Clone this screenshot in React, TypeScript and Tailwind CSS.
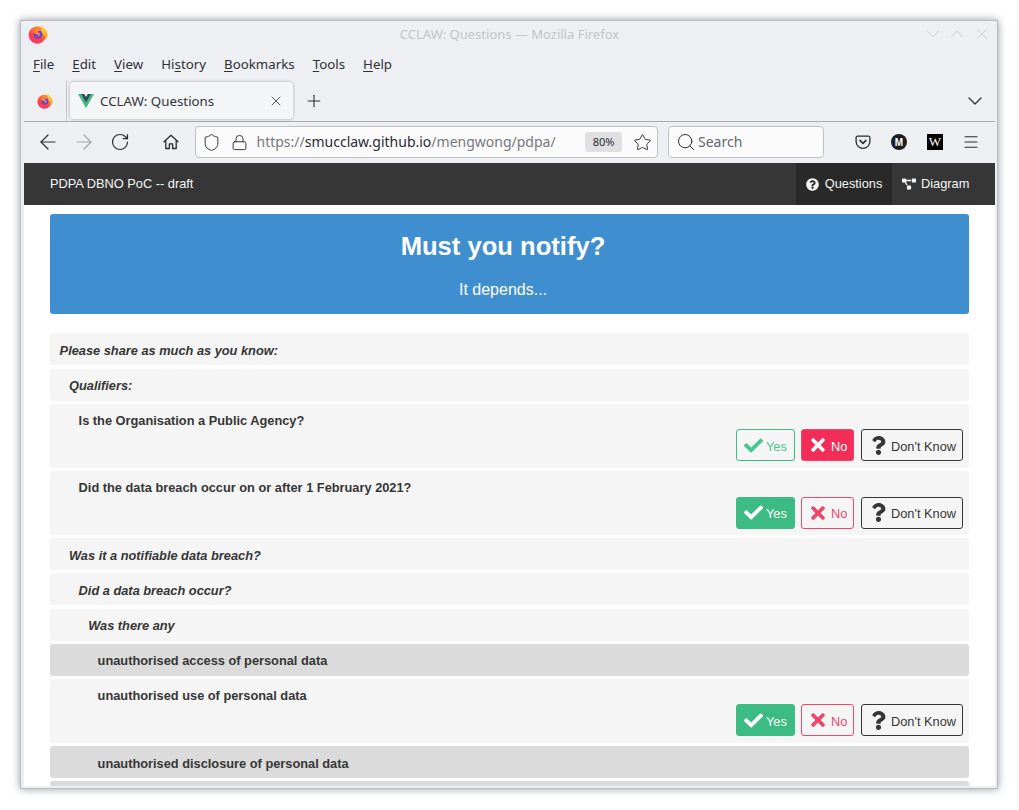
import React from "react";
import {
  ArrowLeft,
  ArrowRight,
  ChevronDown,
  ChevronUp,
  Lock,
  Menu,
  Plus,
  RotateCw,
  Search,
  Shield,
  Star,
  X,
} from "lucide-react";
import { FaCheck, FaProjectDiagram, FaQuestion, FaQuestionCircle, FaTimes } from "react-icons/fa";

type Answer = "yes" | "no" | "none";

interface Row {
  text: string;
  depth: number;
  italic?: boolean;
  grey?: boolean;
  answer?: Answer;
}

const rows: Row[] = [
  { text: "Please share as much as you know:", depth: 0, italic: true },
  { text: "Qualifiers:", depth: 1, italic: true },
  { text: "Is the Organisation a Public Agency?", depth: 2, answer: "no" },
  { text: "Did the data breach occur on or after 1 February 2021?", depth: 2, answer: "yes" },
  { text: "Was it a notifiable data breach?", depth: 1, italic: true },
  { text: "Did a data breach occur?", depth: 2, italic: true },
  { text: "Was there any", depth: 3, italic: true },
  { text: "unauthorised access of personal data", depth: 4, grey: true },
  { text: "unauthorised use of personal data", depth: 4, answer: "yes" },
  { text: "unauthorised disclosure of personal data", depth: 4, grey: true },
  { text: "", depth: 4, grey: true },
];

function FirefoxLogo({ size, id }: { size: number; id: string }) {
  return (
    <svg width={size} height={size} viewBox="0 0 32 32">
      <defs>
        <linearGradient id={`${id}Body`} x1="0.8" y1="0.1" x2="0.2" y2="0.95">
          <stop offset="0" stopColor="#ff9a2e" />
          <stop offset="0.55" stopColor="#ff4f3a" />
          <stop offset="1" stopColor="#e8246e" />
        </linearGradient>
        <linearGradient id={`${id}Flame`} x1="0.5" y1="0" x2="0.5" y2="1">
          <stop offset="0" stopColor="#ffe14d" />
          <stop offset="1" stopColor="#ff9a1f" />
        </linearGradient>
      </defs>
      <circle cx="15" cy="17.5" r="14" fill={`url(#${id}Body)`} />
      <path d="M21 0c1 5 8 6 10 14 1 5-1 9-3 11 0-6-4-10-9-12 3-3 3-8 2-13z" fill={`url(#${id}Flame)`} />
      <circle cx="16" cy="16.5" r="7" fill="#6a3fd6" />
      <path d="M9 11c3-3 9-3 11 1-2-1-4-1-5 1 3 0 5 2 4 5-1 2-4 3-6 2 3 0 4-2 3-3-2-1-7-1-7-6z" fill="#ff8a3a" />
      <path d="M2 12c1 8 8 14 16 13 3 0 6-2 8-4-2 6-9 10-14 9C5 29 0 20 2 12z" fill="#ff3d5a" />
    </svg>
  );
}

function VueLogo() {
  return (
    <svg width="16" height="14" viewBox="0 0 261.76 226.69">
      <path d="M161.096.001l-30.225 52.351L100.647.001H-.005l130.877 226.688L261.749.001z" fill="#41b883" />
      <path d="M161.096.001l-30.225 52.351L100.647.001H52.346l78.526 136.01L209.398.001z" fill="#34495e" />
    </svg>
  );
}

function PocketIcon() {
  return (
    <svg width="16" height="16" viewBox="0 0 16 16" fill="none" stroke="#2b2a33" strokeWidth="1.3">
      <path d="M2.5 2.2h11a1.4 1.4 0 0 1 1.4 1.4v3.9a6.9 6.9 0 0 1-13.8 0V3.6a1.4 1.4 0 0 1 1.4-1.4z" />
      <path d="M5 6.4l3 3 3-3" strokeLinecap="round" strokeLinejoin="round" strokeWidth="1.5" />
    </svg>
  );
}

function HomeIcon() {
  return (
    <svg width="16" height="16" viewBox="0 0 16 16" fill="none" stroke="#2b2a33" strokeWidth="1.3" strokeLinejoin="round">
      <path d="M1 7.8L8 1.2l7 6.6" strokeLinecap="round" />
      <path d="M2.8 6.5v8h3.6V9.8h3.2v4.7h3.6v-8" />
    </svg>
  );
}

function MenuLabel({ pre, mark, post }: { pre?: string; mark: string; post: string }) {
  return (
    <span>
      {pre}
      <span className="underline underline-offset-2">{mark}</span>
      {post}
    </span>
  );
}

function AnswerButtons({ answer }: { answer: Answer }) {
  return (
    <div className="flex justify-end gap-[6px] font-['Liberation_Sans',sans-serif] text-[12.8px]">
      <button
        className={`flex h-[32px] w-[59px] items-center gap-[3px] rounded-[3px] border border-[#3cbb84] pl-[7px] ${
          answer === "yes" ? "bg-[#3cbb84] text-white" : "text-[#48c78e]"
        }`}
      >
        <FaCheck className="text-[19px]" />
        <span className="pt-[2px]">Yes</span>
      </button>
      <button
        className={`flex h-[32px] w-[53px] items-center gap-[3px] rounded-[3px] border border-[#f14668] pl-[6px] ${
          answer === "no" ? "bg-[#f22d57] text-white" : "text-[#f14668]"
        }`}
      >
        <FaTimes className="text-[20px]" />
        <span className="pt-[2px]">No</span>
      </button>
      <button className="ml-px flex h-[32px] w-[102px] items-center gap-[3.5px] rounded-[3px] border border-[#363636] pl-[6.5px] text-[#363636]">
        <FaQuestion className="text-[19px]" />
        <span className="pt-[2px]">Don't Know</span>
      </button>
    </div>
  );
}

function QuestionRow({ row }: { row: Row }) {
  const tall = row.answer !== undefined;
  return (
    <div
      className={`shrink-0 rounded-[3px] pr-[6px] ${row.grey ? "bg-[#dbdbdb]" : "bg-[#f5f5f5]"} ${
        tall ? "h-[64px]" : "h-[32px]"
      }`}
    >
      <div
        className={`h-[25.6px] pt-[9.45px] text-[12.8px] leading-[15px] font-bold text-[#363636] ${row.italic ? "italic" : ""} ${
          row.depth === 0
            ? "pl-[9.6px]"
            : row.depth === 1
              ? "pl-[19px]"
              : row.depth === 2
                ? "pl-[28.6px]"
                : row.depth === 3
                  ? "pl-[38.2px]"
                  : "pl-[47.6px]"
        }`}
      >
        {row.text}
      </div>
      {row.answer && <AnswerButtons answer={row.answer} />}
    </div>
  );
}

export default function App() {
  return (
    <div className="h-[810px] w-[1019px] overflow-hidden bg-white pt-[20px] pl-[20px] antialiased">
      <div className="flex h-[769px] w-[978px] flex-col overflow-hidden border border-[#b6bcc2] bg-[#eeeff2] pb-[2px] shadow-[0_0_8px_rgba(60,70,80,0.55)] font-['Noto_Sans',sans-serif]">
        {/* title bar */}
        <div className="flex h-[29px] shrink-0 items-center pt-[1px] pr-[6.5px] pb-[4px] pl-[7px]">
          <FirefoxLogo size={20} id="ffTitle" />
          <div className="flex-1 pt-[1px] pl-[49px] text-center text-[13px] text-[#c1c4c9]">CCLAW: Questions — Mozilla Firefox</div>
          <div className="flex items-center text-[#c6c9cd]">
            <ChevronDown size={22} strokeWidth={1} />
            <ChevronUp size={22} strokeWidth={1} className="ml-[2px]" />
            <X size={18} strokeWidth={1.1} className="ml-[4.5px]" />
          </div>
        </div>

        {/* menu bar */}
        <div className="flex h-[30px] shrink-0 items-center gap-[18px] pl-[12px] text-[13.3px] text-[#2f3033]">
          <MenuLabel mark="F" post="ile" />
          <MenuLabel mark="E" post="dit" />
          <MenuLabel mark="V" post="iew" />
          <MenuLabel pre="Hi" mark="s" post="tory" />
          <MenuLabel mark="B" post="ookmarks" />
          <MenuLabel mark="T" post="ools" />
          <MenuLabel mark="H" post="elp" />
        </div>

        {/* tab strip */}
        <div className="mr-[2px] ml-[3px] flex h-[42px] shrink-0 items-center border-b border-[#a9abae] pr-[8px]">
          <div className="flex w-[42px] justify-center">
            <FirefoxLogo size={16} id="ffTab" />
          </div>
          <div className="h-full w-px bg-[#c4c6c9]" />
          <div className="ml-[3px] flex h-[37px] w-[223px] items-center rounded-[4px] bg-[#f4f5f7] pr-[9.5px] pl-[8px] shadow-[0_0_3px_rgba(0,0,0,0.35)]">
            <VueLogo />
            <span className="ml-[6px] flex-1 pt-[2px] text-[13.3px] text-[#33343a]">CCLAW: Questions</span>
            <X size={16} strokeWidth={1.2} className="text-[#33343a]" />
          </div>
          <Plus size={20} strokeWidth={1.3} className="ml-[11px] text-[#2b2a33]" />
          <ChevronDown size={24} strokeWidth={1.2} className="ml-auto text-[#2b2a33]" />
        </div>

        {/* nav toolbar */}
        <div className="mr-[2px] ml-[3px] flex h-[41px] shrink-0 items-center pb-[1px] text-[#2b2a33]">
          <div className="flex w-[36px] justify-end">
            <ArrowLeft size={24} strokeWidth={1.2} />
          </div>
          <ArrowRight size={24} strokeWidth={1.2} className="ml-[12px] text-[#a2a3a7]" />
          <RotateCw size={20} strokeWidth={1.4} className="ml-[14px]" />
          <div className="ml-[33px]">
            <HomeIcon />
          </div>
          <div className="ml-[16px] flex h-[32px] w-[463px] items-center rounded-[4px] border border-[#bfc1c4] bg-[#fbfbfc] pr-[5.5px] pl-[6px]">
            <Shield size={19} strokeWidth={1.2} />
            <Lock size={17} strokeWidth={1.3} className="ml-[10px]" />
            <span className="ml-[8.5px] flex-1 pb-[2px] text-[14px] text-[#77787c]">
              https://<span className="text-[#2b2a33]">smucclaw.github.io</span>/mengwong/pdpa/
            </span>
            <span className="flex h-[20px] w-[37px] items-center justify-center rounded-[3px] bg-[#e0e0e2] text-[11px]">80%</span>
            <Star size={19} strokeWidth={1.2} className="ml-[10.5px]" />
          </div>
          <div className="ml-[10px] flex h-[32px] w-[156px] items-center rounded-[4px] border border-[#bfc1c4] bg-[#fbfbfc] pl-[7px]">
            <Search size={20} strokeWidth={1.2} />
            <span className="ml-[2px] pb-[2px] text-[14px] text-[#66676b]">Search</span>
          </div>
          <div className="ml-[31px]">
            <PocketIcon />
          </div>
          <div className="ml-[20px] flex h-[16px] w-[16px] items-center justify-center rounded-full bg-[#1d1d1f] font-['Liberation_Sans',sans-serif] text-[10px] font-bold text-white">
            M
          </div>
          <div className="ml-[20px] flex h-[16px] w-[16px] items-center justify-center bg-black font-['Liberation_Serif',serif] text-[13px] text-white">
            W
          </div>
          <Menu size={18} strokeWidth={1.4} className="ml-[19px]" />
        </div>

        {/* page */}
        <div className="mr-[2px] ml-[3px] min-h-0 flex-1 overflow-hidden bg-white font-['Liberation_Sans',sans-serif]">
          <nav className="flex h-[42px] items-stretch bg-[#363636] pl-[26px] text-[12.8px] text-[#f5f5f5]">
            <div className="flex flex-1 items-center">PDPA DBNO PoC -- draft</div>
            <div className="flex w-[96px] items-center justify-center gap-[6px] bg-[#292929]">
              <FaQuestionCircle className="text-[13px]" />
              <span>Questions</span>
            </div>
            <div className="flex w-[103px] items-center gap-[5px] pl-[10px]">
              <FaProjectDiagram className="text-[14px]" />
              <span>Diagram</span>
            </div>
          </nav>

          <div className="mx-[26px] mt-[9px] flex h-[100px] flex-col items-center rounded-[3px] bg-[#3e8ed0] pr-[13px] text-white">
            <h1 className="mt-[17px] text-[25.6px] leading-[30px] font-bold">Must you notify?</h1>
            <p className="mt-[20px] text-[16px] leading-[18px]">It depends...</p>
          </div>

          <div className="mx-[26px] mt-[19.4px] flex flex-col gap-[3.2px]">
            {rows.map((row, i) => (
              <QuestionRow key={i} row={row} />
            ))}
          </div>
        </div>
      </div>
    </div>
  );
}
